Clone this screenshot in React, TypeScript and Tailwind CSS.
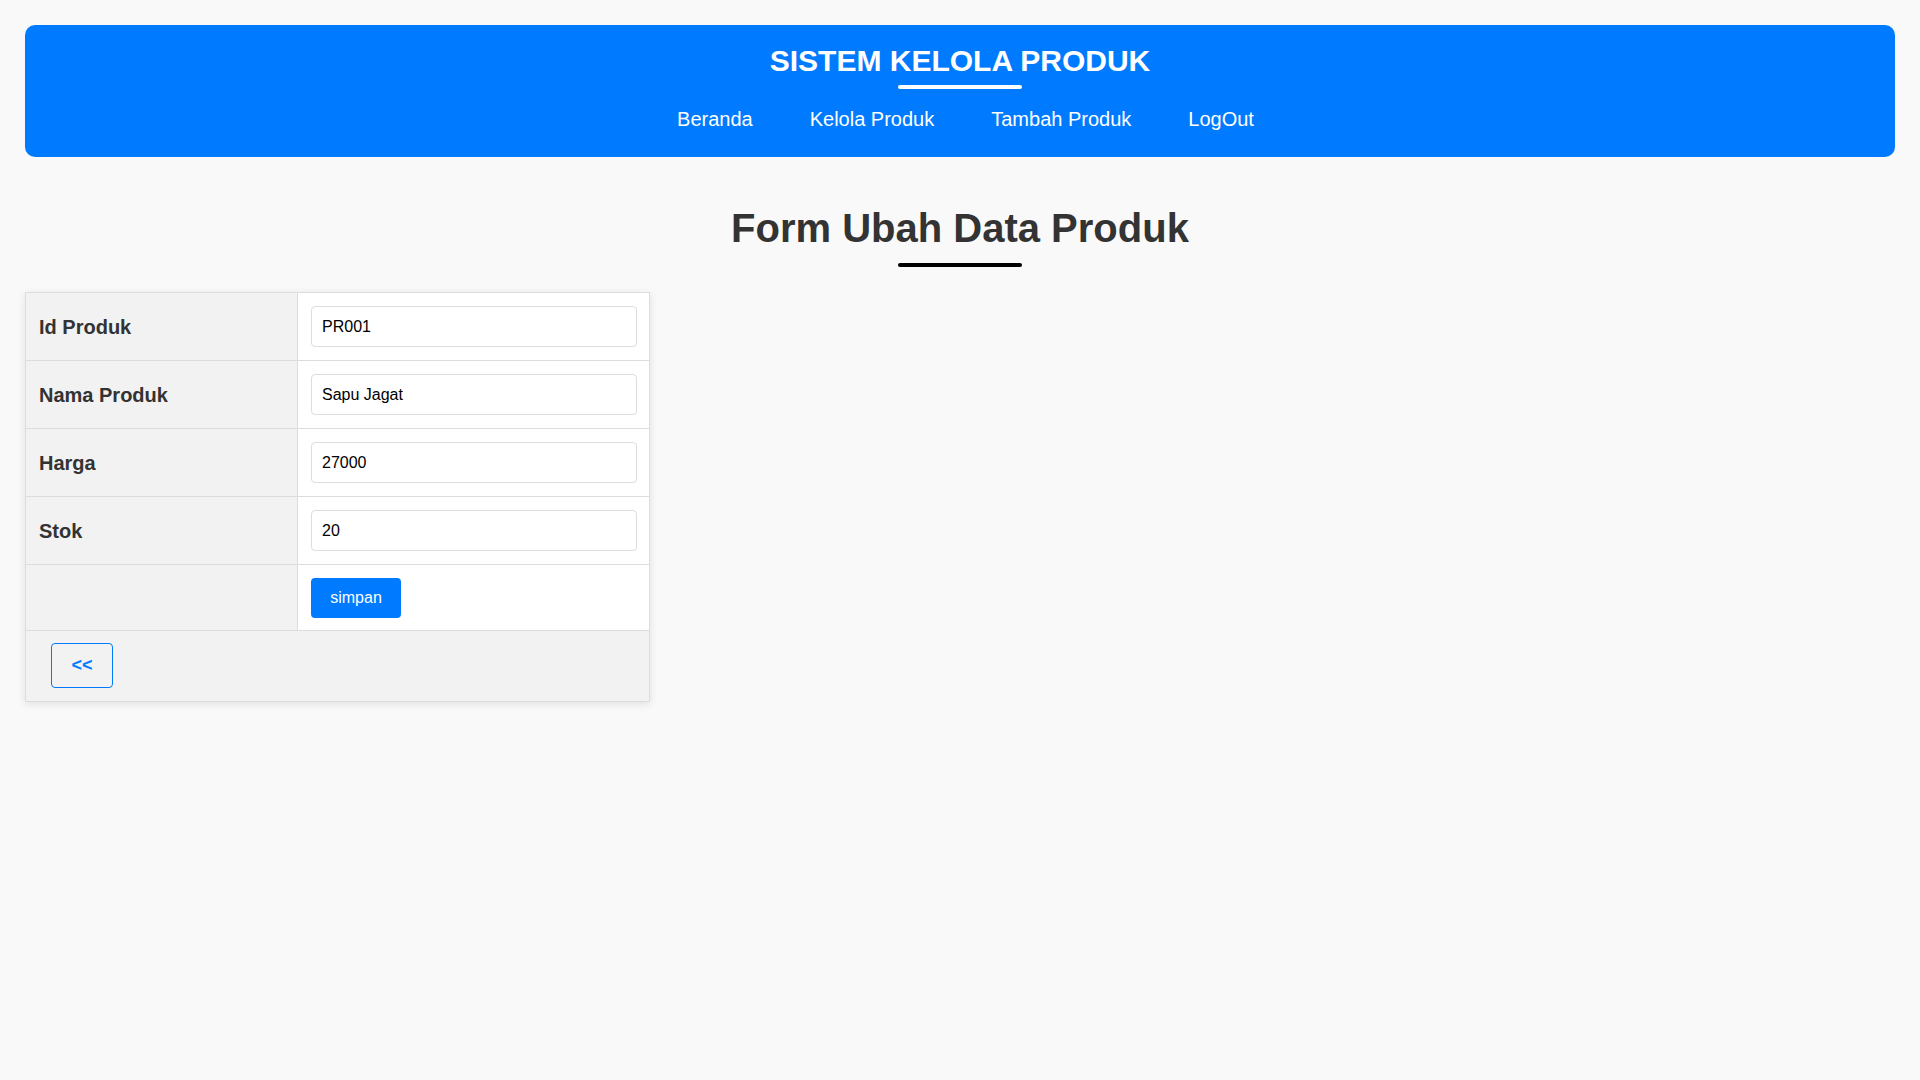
import React from 'react';

const links = ['Beranda', 'Kelola Produk', 'Tambah Produk', 'LogOut'];

const rows = [
  { label: 'Id Produk', value: 'PR001' },
  { label: 'Nama Produk', value: 'Sapu Jagat' },
  { label: 'Harga', value: '27000' },
  { label: 'Stok', value: '20' },
];

export default function App() {
  return (
    <div className="min-h-screen bg-[#f9f9f9] px-[25px] pt-[25px] font-['Liberation_Sans',Arial,sans-serif]">
      {/* Header */}
      <header className="rounded-[10px] bg-[#007bff] pt-[19px] pb-[26px] text-white">
        <h1 className="text-center text-[30px] font-bold leading-[34px]">SISTEM KELOLA PRODUK</h1>
        <div className="mx-auto mt-[7px] h-[4px] w-[124px] rounded-full bg-white" />
        <nav className="mt-[19px] flex justify-center gap-[57px] pl-[11px]">
          {links.map((l) => (
            <a key={l} href="#" className="text-[20px] leading-[23px] text-white">
              {l}
            </a>
          ))}
        </nav>
      </header>

      {/* Title */}
      <h2 className="mt-[48px] text-center text-[40px] font-bold leading-[46px] text-[#333]">Form Ubah Data Produk</h2>
      <div className="mx-auto mt-[12px] h-[4px] w-[124px] rounded-full bg-black" />

      {/* Form table */}
      <div className="mt-[25px] w-[625px] border border-[#ddd] bg-white shadow-[0_2px_8px_rgba(0,0,0,0.1)]">
        {rows.map((r) => (
          <div key={r.label} className="grid h-[68px] grid-cols-[272px_1fr] border-b border-[#ddd]">
            <div className="flex items-center border-r border-[#ddd] bg-[#f2f2f2] px-[13px] text-[20px] font-bold text-[#333]">
              {r.label}
            </div>
            <div className="flex items-center pl-[13px] pr-[12px]">
              <input
                defaultValue={r.value}
                className="h-[41px] w-full rounded-[4px] border border-[#ddd] bg-white px-[10px] text-[16px] text-black outline-none"
              />
            </div>
          </div>
        ))}
        <div className="grid h-[66px] grid-cols-[272px_1fr] border-b border-[#ddd]">
          <div className="border-r border-[#ddd] bg-[#f2f2f2]" />
          <div className="flex items-center pl-[13px] pr-[12px]">
            <button className="h-[40px] w-[90px] rounded-[4px] bg-[#007bff] text-[16px] text-white">simpan</button>
          </div>
        </div>
        <div className="h-[70px] bg-[#f2f2f2] pl-[25px] pt-[12px]">
          <a
            href="#"
            className="inline-flex h-[45px] w-[62px] items-center justify-center rounded-[4px] border border-[#007bff] text-[18px] font-bold text-[#007bff]"
          >
            &lt;&lt;
          </a>
        </div>
      </div>
    </div>
  );
}
